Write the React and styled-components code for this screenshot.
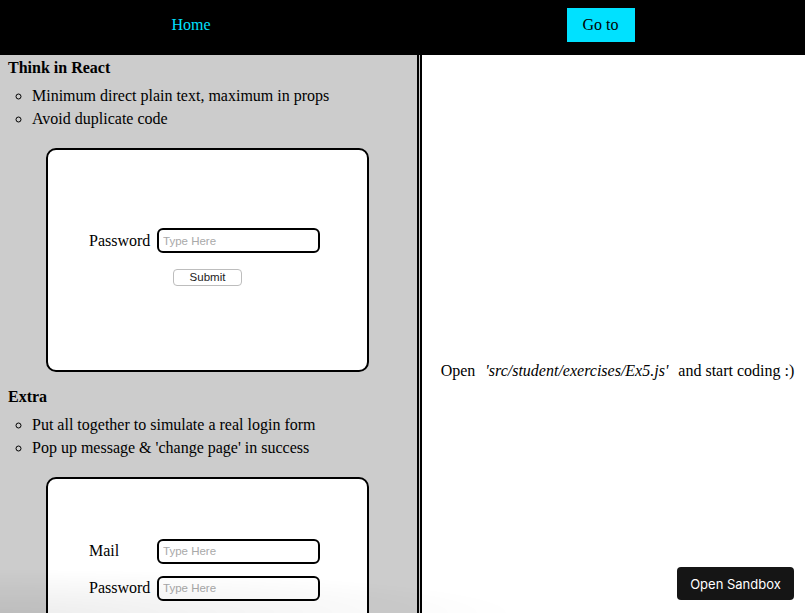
import styled, { createGlobalStyle } from 'styled-components';

const GlobalStyle = createGlobalStyle`
  html, body {
    margin: 0;
    padding: 0;
    overflow: hidden;
  }
  body {
    font-family: "Liberation Serif", "Times New Roman", serif;
    font-size: 16px;
    color: #000;
    background: #fff;
  }
  * {
    box-sizing: border-box;
  }
`;

const Header = styled.header`
  display: grid;
  grid-template-columns: 382px 1fr;
  align-items: center;
  height: 55px;
  padding-bottom: 5px;
  background-color: #000;
`;

const HeaderCell = styled.div`
  display: flex;
  justify-content: center;
  padding-left: ${({ $shift }) => $shift || 0}px;
`;

const HomeLink = styled.a`
  color: #00e1ff;
  text-decoration: none;
  line-height: 18px;
`;

const GoToButton = styled.button`
  background-color: #00e1ff;
  color: #000;
  border: none;
  padding: 8px 16px;
  font-family: "Liberation Serif", "Times New Roman", serif;
  font-size: 16px;
  line-height: 18px;
`;

const Main = styled.main`
  display: flex;
  align-items: flex-start;
`;

const LeftPanel = styled.section`
  width: 422px;
  flex-shrink: 0;
  background-color: #ccc;
  border-right: 5px double #000;
  padding: 4px 10px 0 8px;
`;

const Heading = styled.h3`
  margin: 0;
  font-size: 16px;
  line-height: 18px;
  font-weight: bold;
`;

const List = styled.ul`
  margin: 7px 0 0;
  padding-left: 24px;
  list-style: circle;
`;

const Item = styled.li`
  line-height: 23px;
`;

const Card = styled.div`
  width: 323px;
  height: 224px;
  margin: 18px auto 16px;
  background: #fff;
  border: 2px solid #000;
  border-radius: 10px;
  display: flex;
  flex-direction: column;
  align-items: center;
  justify-content: center;
  gap: 12px;
  padding-bottom: 6px;
`;

const Row = styled.div`
  display: flex;
  align-items: center;
  padding-right: 6px;
`;

const Label = styled.label`
  width: 64px;
  margin-right: 4px;
  line-height: 18px;
`;

const Input = styled.input`
  width: 163px;
  height: 25px;
  border: 2px solid #000;
  border-radius: 6px;
  padding: 0 4px;
  font-family: "Liberation Sans", Arial, sans-serif;
  font-size: 11.5px;
  background: #fff;
  outline: none;

  &::placeholder {
    color: #a9a9a9;
  }
`;

const SubmitButton = styled.button`
  width: 69px;
  height: 17px;
  margin-top: 4px;
  padding: 0;
  background: #fff;
  border: 1px solid #bdbdbd;
  border-radius: 4px;
  font-family: "Liberation Sans", Arial, sans-serif;
  font-size: 11.5px;
  color: #222;
  line-height: 15px;
`;

const RightPanel = styled.section`
  flex: 1;
  height: 632px;
  display: flex;
  align-items: center;
  justify-content: center;
  padding-left: 8px;
`;

const Hint = styled.p`
  margin: 0;
  line-height: 18px;
`;

const Path = styled.em`
  margin: 0 10px;
`;

const SandboxButton = styled.button`
  position: fixed;
  right: 11px;
  bottom: 13px;
  width: 117px;
  height: 33px;
  background: #151515;
  color: #fff;
  border: none;
  border-radius: 4px;
  font-family: Inter, "Liberation Sans", sans-serif;
  font-size: 13px;
`;

const BottomShade = styled.div`
  position: fixed;
  left: 0;
  bottom: 0;
  width: 520px;
  height: 44px;
  pointer-events: none;
  background: radial-gradient(ellipse 520px 44px at 0 100%, rgba(0, 0, 0, 0.07), rgba(0, 0, 0, 0));
`;

const PasswordForm = () => (
  <Card>
    <Row>
      <Label>Password</Label>
      <Input type="password" placeholder="Type Here" />
    </Row>
    <SubmitButton>Submit</SubmitButton>
  </Card>
);

const LoginForm = () => (
  <Card>
    <Row>
      <Label>Mail</Label>
      <Input type="text" placeholder="Type Here" />
    </Row>
    <Row>
      <Label>Password</Label>
      <Input type="password" placeholder="Type Here" />
    </Row>
    <SubmitButton>Submit</SubmitButton>
  </Card>
);

export default function App() {
  return (
    <>
      <GlobalStyle />
      <Header>
        <HeaderCell>
          <HomeLink href="#">Home</HomeLink>
        </HeaderCell>
        <HeaderCell $shift={14}>
          <GoToButton>Go to</GoToButton>
        </HeaderCell>
      </Header>
      <Main>
        <LeftPanel>
          <Heading>Think in React</Heading>
          <List>
            <Item>Minimum direct plain text, maximum in props</Item>
            <Item>Avoid duplicate code</Item>
          </List>
          <PasswordForm />
          <Heading>Extra</Heading>
          <List>
            <Item>Put all together to simulate a real login form</Item>
            <Item>Pop up message &amp; 'change page' in success</Item>
          </List>
          <LoginForm />
        </LeftPanel>
        <RightPanel>
          <Hint>
            Open<Path>'src/student/exercises/Ex5.js'</Path>and start coding :)
          </Hint>
        </RightPanel>
      </Main>
      <BottomShade />
      <SandboxButton>Open Sandbox</SandboxButton>
    </>
  );
}
